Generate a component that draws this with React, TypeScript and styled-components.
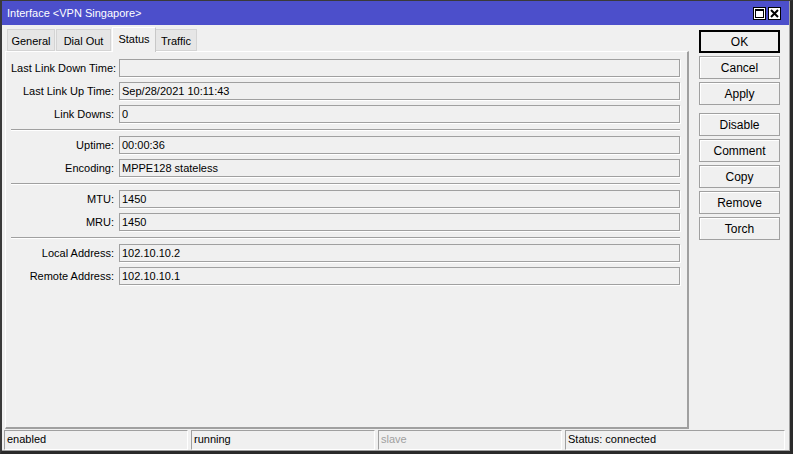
import React from 'react';
import styled, { createGlobalStyle } from 'styled-components';

const GlobalStyle = createGlobalStyle`
  html, body {
    margin: 0;
    padding: 0;
    background: #f0f0f0;
  }
  body {
    font-family: "Liberation Sans", Arial, sans-serif;
    font-size: 11px;
    color: #000;
  }
`;

type Field = { label: string; value: string };

const groups: Field[][] = [
  [
    { label: 'Last Link Down Time:', value: '' },
    { label: 'Last Link Up Time:', value: 'Sep/28/2021 10:11:43' },
    { label: 'Link Downs:', value: '0' },
  ],
  [
    { label: 'Uptime:', value: '00:00:36' },
    { label: 'Encoding:', value: 'MPPE128 stateless' },
  ],
  [
    { label: 'MTU:', value: '1450' },
    { label: 'MRU:', value: '1450' },
  ],
  [
    { label: 'Local Address:', value: '102.10.10.2' },
    { label: 'Remote Address:', value: '102.10.10.1' },
  ],
];

const tabs = [
  { name: 'General', width: 48 },
  { name: 'Dial Out', width: 55 },
  { name: 'Status', width: 44 },
  { name: 'Traffic', width: 42 },
];
const buttonsTop = ['OK', 'Cancel', 'Apply'];
const buttonsBottom = ['Disable', 'Comment', 'Copy', 'Remove', 'Torch'];

const App = () => {
  return (
    <>
      <GlobalStyle />
      <StWindow>
        <StTitleBar>
          <StTitle>Interface &lt;VPN Singapore&gt;</StTitle>
          <StTitleButtons>
            <StTitleButton>
              <svg width="9" height="9" viewBox="0 0 9 9">
                <rect x="0.5" y="0.5" width="8" height="8" fill="none" stroke="#000" />
                <line x1="0" y1="1.5" x2="9" y2="1.5" stroke="#000" />
              </svg>
            </StTitleButton>
            <StTitleButton>
              <svg width="9" height="9" viewBox="0 0 9 9">
                <path d="M1 1 L8 8 M8 1 L1 8" stroke="#000" strokeWidth="2" />
              </svg>
            </StTitleButton>
          </StTitleButtons>
        </StTitleBar>
        <StBody>
          <StMain>
            <StTabs>
              {tabs.map((t) => (
                <StTab key={t.name} $active={t.name === 'Status'} $width={t.width}>
                  {t.name}
                </StTab>
              ))}
            </StTabs>
            <StPanel>
              {groups.map((group, gi) => (
                <React.Fragment key={gi}>
                  {gi > 0 && <StSeparator />}
                  {group.map((f) => (
                    <StRow key={f.label}>
                      <StLabel>{f.label}</StLabel>
                      <StInput>{f.value}</StInput>
                    </StRow>
                  ))}
                </React.Fragment>
              ))}
            </StPanel>
          </StMain>
          <StButtons>
            {buttonsTop.map((b) => (
              <StButton key={b} $default={b === 'OK'}>
                {b}
              </StButton>
            ))}
            <StButtonGap />
            {buttonsBottom.map((b) => (
              <StButton key={b}>{b}</StButton>
            ))}
          </StButtons>
        </StBody>
        <StStatusBar>
          <StStatusCell $width={184}>enabled</StStatusCell>
          <StStatusCell $width={184}>running</StStatusCell>
          <StStatusCell $width={184} $muted>
            slave
          </StStatusCell>
          <StStatusCell $width={220}>Status: connected</StStatusCell>
        </StStatusBar>
      </StWindow>
    </>
  );
};

export default App;

const StWindow = styled.div`
  box-sizing: border-box;
  width: 793px;
  height: 454px;
  display: flex;
  flex-direction: column;
  background: #f0f0f0;
  border-top: 1px solid #3a3a3a;
  border-left: 2px solid #3a3a3a;
  border-right: 3px solid #2a2a2a;
  border-bottom: 3px solid #2a2a2a;
  box-shadow: inset -1px -1px 0 #a0a0a0;
`;

const StTitleBar = styled.div`
  height: 24px;
  margin-right: 1px;
  background: #4c4fcb;
  display: flex;
  align-items: center;
  justify-content: space-between;
  padding: 0 8px 0 5px;
`;

const StTitle = styled.span`
  color: #fff;
  font-size: 11px;
`;

const StTitleButtons = styled.div`
  display: flex;
  gap: 2px;
`;

const StTitleButton = styled.div`
  box-sizing: border-box;
  width: 13px;
  height: 13px;
  background: #fff;
  border: 1px solid #000;
  display: flex;
  align-items: center;
  justify-content: center;
`;

const StBody = styled.div`
  flex: 1;
  display: flex;
  padding: 1px 8px 0 3px;
  gap: 10px;
`;

const StMain = styled.div`
  width: 684px;
  display: flex;
  flex-direction: column;
`;

const StTabs = styled.div`
  display: flex;
  align-items: flex-end;
  height: 25px;
  padding-left: 2px;
`;

const StTab = styled.div<{ $active?: boolean; $width: number }>`
  box-sizing: border-box;
  width: ${(p) => p.$width}px;
  height: ${(p) => (p.$active ? '25px' : '22px')};
  padding-top: 5px;
  text-align: center;
  margin: ${(p) => (p.$active ? '0 -1px -1px 0' : '0 1px 0 0')};
  background: ${(p) => (p.$active ? '#f0f0f0' : '#e6e6e6')};
  border: 1px solid ${(p) => (p.$active ? '#fff' : '#d4d4d4')};
  border-right-color: ${(p) => (p.$active ? '#c8c8c8' : '#d4d4d4')};
  border-bottom: ${(p) => (p.$active ? 'none' : '1px solid #d4d4d4')};
  position: relative;
  z-index: ${(p) => (p.$active ? 1 : 0)};
`;

const StPanel = styled.div`
  box-sizing: border-box;
  flex: 1;
  border-top: 1px solid #fff;
  border-left: 1px solid #fff;
  border-right: 2px solid #a0a0a0;
  border-bottom: 2px solid #a0a0a0;
  padding: 7px 7px 0 5px;
  display: flex;
  flex-direction: column;
  gap: 5px;
`;

const StRow = styled.div`
  display: flex;
  align-items: center;
  height: 18px;
`;

const StLabel = styled.div`
  width: 103px;
  padding-right: 5px;
  text-align: right;
  white-space: nowrap;
`;

const StInput = styled.div`
  box-sizing: border-box;
  flex: 1;
  height: 18px;
  border: 1px solid #a0a0a0;
  box-shadow: 1px 1px 0 #fff;
  padding: 1px 2px 0;
  line-height: 14px;
  white-space: nowrap;
`;

const StSeparator = styled.div`
  margin: 1px 0 0;
  height: 1px;
  background: #a0a0a0;
  border-bottom: 1px solid #fff;
`;

const StButtons = styled.div`
  width: 81px;
  display: flex;
  flex-direction: column;
  gap: 3px;
  padding-top: 4px;
`;

const StButtonGap = styled.div`
  height: 2px;
`;

const StButton = styled.div<{ $default?: boolean }>`
  box-sizing: border-box;
  height: 23px;
  display: flex;
  align-items: center;
  justify-content: center;
  font-size: 12px;
  background: #f0f0f0;
  border: ${(p) => (p.$default ? '2px solid #000' : '1px solid #a0a0a0')};
  box-shadow: ${(p) => (p.$default ? 'none' : 'inset 1px 1px 0 #fff')};
`;

const StStatusBar = styled.div`
  display: flex;
  gap: 3px;
  padding: 1px 3px 1px 2px;
  height: 22px;
  box-sizing: border-box;
`;

const StStatusCell = styled.div<{ $width: number; $muted?: boolean }>`
  box-sizing: border-box;
  width: ${(p) => p.$width}px;
  height: 20px;
  border-top: 1px solid #a0a0a0;
  border-left: 1px solid #a0a0a0;
  border-right: 1px solid #fff;
  border-bottom: 1px solid #fff;
  padding: 2px 2px 0;
  color: ${(p) => (p.$muted ? '#a0a0a0' : '#000')};
`;
